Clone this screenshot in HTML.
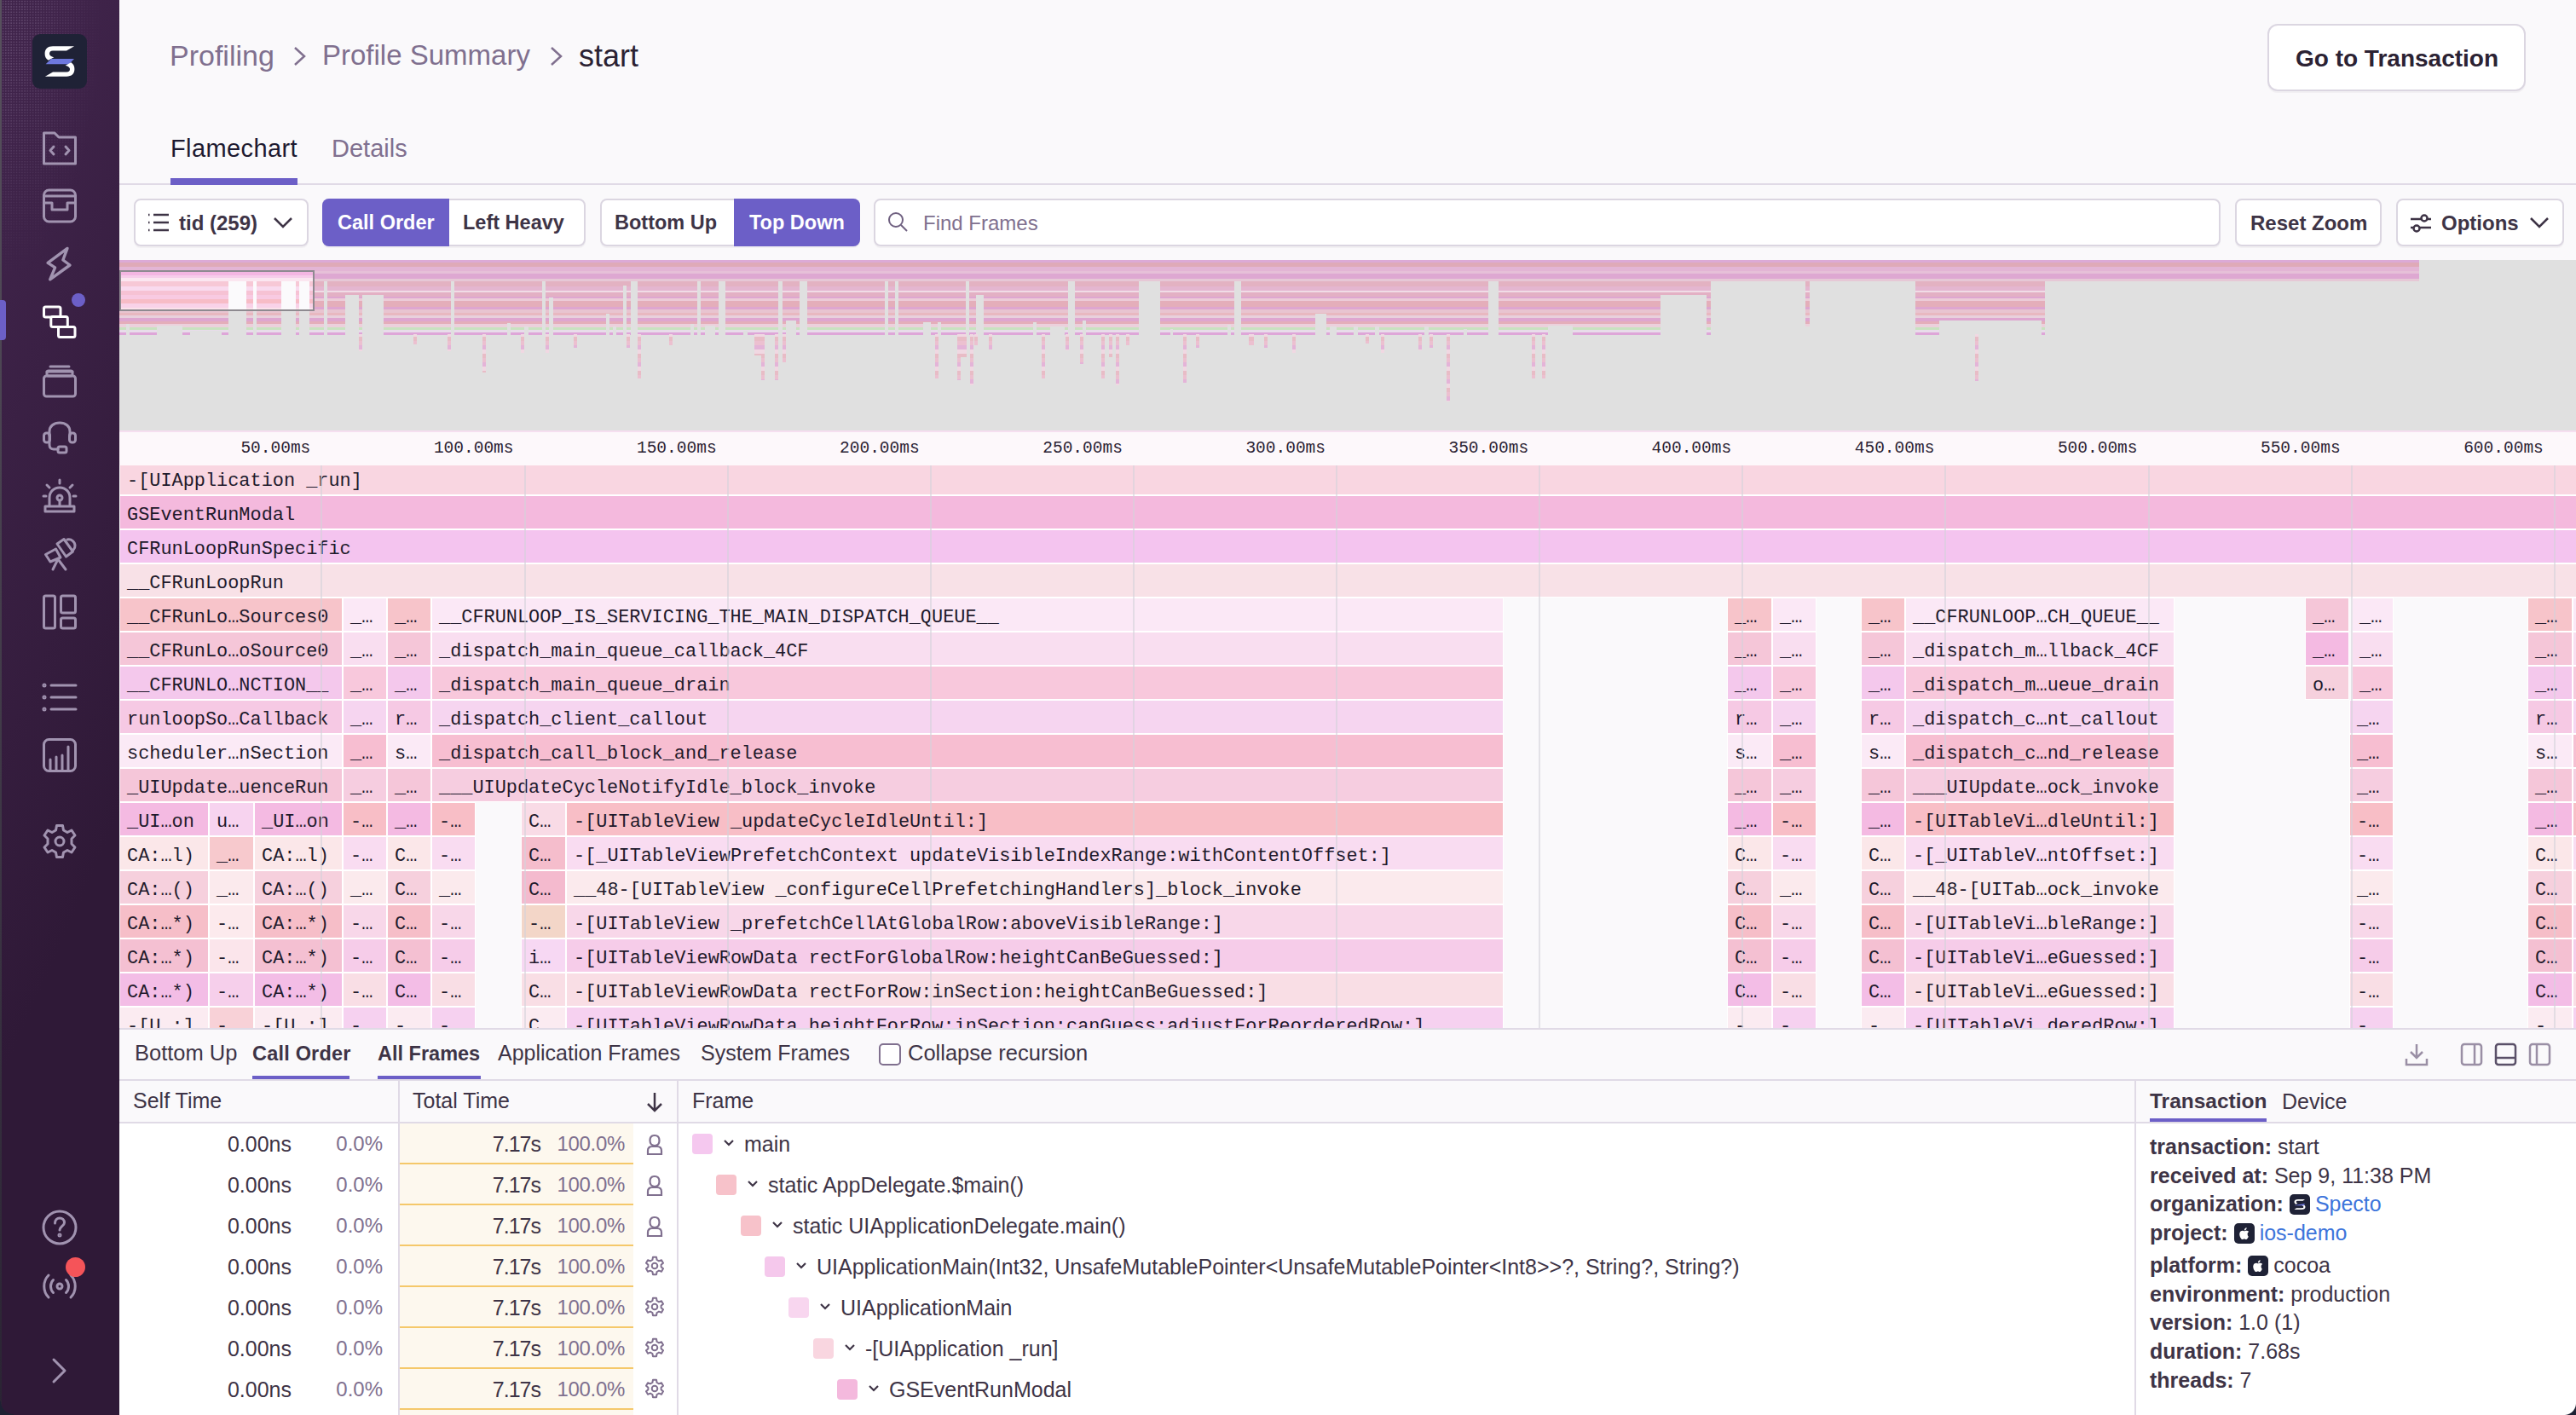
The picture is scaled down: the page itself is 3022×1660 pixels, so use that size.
<!DOCTYPE html><html><head><meta charset="utf-8"><style>
*{box-sizing:border-box}
html,body{margin:0;padding:0}
body{width:3022px;height:1660px;position:relative;overflow:hidden;background:#faf9fb;font-family:"Liberation Sans",sans-serif;color:#2b2233}
.a{position:absolute}
.t{position:absolute;white-space:nowrap;line-height:1}
.btn{position:absolute;background:#fff;border:2px solid #dbd6e1;border-radius:8px;box-shadow:0 2px 0 rgba(43,34,51,0.04)}
.fb{position:absolute;overflow:hidden;box-shadow:0 0 0 1px #fff;font-family:"Liberation Mono",monospace;font-size:21.9px;color:#1f1a2c;white-space:pre;line-height:38px;padding-left:8px}
.fb span{position:relative;top:4px}
.ic{position:absolute;fill:none;stroke:#a193b0;stroke-width:3;stroke-linecap:round;stroke-linejoin:round}
</style></head><body>

<div class="a" style="left:0;top:0;width:140px;height:1660px;background:linear-gradient(294.17deg,#2f1937 35.57%,#40244b 92.42%)"></div>
<div class="a" style="left:0;top:0;width:2px;height:1660px;background:linear-gradient(#58525e,#2a2433)"></div>
<div class="a" style="left:2px;top:0;width:138px;height:360px;background-image:radial-gradient(circle,rgba(170,150,185,0.30) 0.7px,transparent 1px);background-size:3.2px 3.2px;-webkit-mask-image:radial-gradient(ellipse 120px 330px at 0 0,#000 20%,transparent 100%)"></div>
<div class="a" style="left:0;bottom:0;width:16px;height:16px;background:radial-gradient(circle at 16px 0,transparent 14.5px,#1e2133 15.5px);z-index:5"></div>
<svg class="a" style="left:38px;top:40px" width="64" height="64" viewBox="0 0 64 64">
<rect x="0" y="0" width="64" height="64" rx="9" fill="#1f2236"/>
<path d="M49.1 14.3 L40 19.4 L24 19.4 C21 19.4 20 21 20 23 C20 24.5 21 25.8 25.3 27.3 L18.6 30.7 C15.5 28.5 14.6 26 14.6 23 C14.6 17.5 18 14.3 24 14.3 Z" fill="#fff"/>
<path d="M22 29 L49 29 L43 35.2 L15.7 35.2 Z" fill="#6e78dd"/>
<path d="M14.9 49.7 L24 44.6 L40 44.6 C43 44.6 44 43 44 41 C44 39.5 43 38.2 38.7 36.7 L45.4 33.3 C48.5 35.5 49.4 38 49.4 41 C49.4 46.5 46 49.7 40 49.7 Z" fill="#fff"/>
</svg>
<svg class="ic" style="left:48px;top:152px" width="44" height="44" viewBox="0 0 44 44"><path d="M3.5 4 H16 L21 9 H40.5 V40 H3.5 Z"/><path d="M15 20 L11 24.5 L15 29 M29 20 L33 24.5 L29 29"/></svg>
<svg class="ic" style="left:48px;top:220px" width="44" height="44" viewBox="0 0 44 44"><rect x="3.5" y="3" width="37" height="37" rx="6"/><path d="M3.5 10 H40.5 M3.5 18 H13 V26 H31 V18 H40.5"/></svg>
<svg class="ic" style="left:48px;top:287px" width="44" height="44" viewBox="0 0 44 44"><path d="M31 4.4 L8.1 21.4 L16.6 26.9 L10.7 40.9 L34 24 L25.9 18 Z" style="stroke-width:3.4"/></svg>
<svg class="ic" style="left:48px;top:356px;stroke:#fff" width="44" height="44" viewBox="0 0 44 44"><rect x="3.5" y="4" width="19.5" height="12" rx="2" fill="#40244a"/><rect x="11.8" y="15.5" width="19.5" height="12" rx="2" fill="#3f2449"/><rect x="20.5" y="27.5" width="19.5" height="12" rx="2" fill="#3e2448"/></svg>
<div class="a" style="left:84px;top:344px;width:16px;height:16px;border-radius:50%;background:#6c5fc7"></div>
<div class="a" style="left:0;top:352px;width:7px;height:47px;border-radius:0 4px 4px 0;background:#6c5fc7"></div>
<svg class="ic" style="left:48px;top:424px" width="44" height="44" viewBox="0 0 44 44"><path d="M11 6 H33 M7 12 H37"/><rect x="3.5" y="17" width="37" height="24" rx="3"/><rect x="7" y="11" width="30" height="6" rx="2"/></svg>
<svg class="ic" style="left:48px;top:492px" width="44" height="44" viewBox="0 0 44 44"><path d="M10 19 V14 C10 8 15 4 22 4 C29 4 34 8 34 14 V19"/><rect x="3.5" y="16" width="7" height="11" rx="3"/><rect x="33.5" y="16" width="7" height="11" rx="3"/><path d="M10 18 V30 C10 33 12 35 15 35 H20"/><rect x="20" y="32" width="10" height="7" rx="2"/></svg>
<svg class="ic" style="left:48px;top:560px" width="44" height="44" viewBox="0 0 44 44"><path d="M5 40 H39 V34 H5 Z M10 34 V24 C10 17 15 12 22 12 C29 12 34 17 34 24 V34"/><circle cx="22" cy="24" r="3"/><path d="M22 27 V33 M22 3 V7 M7 9 L10 12 M37 9 L34 12 M3 22 H6 M41 22 H38"/></svg>
<svg class="ic" style="left:48px;top:628px" width="44" height="44" viewBox="0 0 44 44"><path d="M5.5 22.5 L17.5 16 L23 26 L11 31 Z"/><path d="M19 10 L27 4.5 L37.5 19 L29.5 25 Z"/><path d="M31 5 C36 4 40 8 40 12 C40 14 39.5 15.5 38.5 16.5"/><path d="M20 28 L14 40 M20 28 L29 40"/></svg>
<svg class="ic" style="left:48px;top:696px" width="44" height="44" viewBox="0 0 44 44"><rect x="3.5" y="3" width="13" height="38" rx="2"/><rect x="23.5" y="3" width="17" height="20" rx="2"/><rect x="23.5" y="29" width="17" height="12" rx="2"/></svg>
<svg class="ic" style="left:48px;top:796px" width="44" height="44" viewBox="0 0 44 44"><path d="M12 8 H41 M12 22 H41 M12 36 H41"/><circle cx="4" cy="8" r="1" /><circle cx="4" cy="22" r="1"/><circle cx="4" cy="36" r="1"/></svg>
<svg class="ic" style="left:48px;top:864px" width="44" height="44" viewBox="0 0 44 44"><rect x="3.5" y="3.5" width="37" height="37" rx="6"/><path d="M11 40 V27 M18 40 V24 M25 40 V22 M32 40 V12"/></svg>
<svg class="ic" style="left:48px;top:965px" width="44" height="44" viewBox="0 0 44 44"><path d="M18.5 3.5 H25.5 L26.5 9 L31 11.5 L36 9 L40 15 L36 19 V25 L40 29 L36 35 L31 32.5 L26.5 35 L25.5 40.5 H18.5 L17.5 35 L13 32.5 L8 35 L4 29 L8 25 V19 L4 15 L8 9 L13 11.5 L17.5 9 Z"/><circle cx="22" cy="22" r="5"/></svg>
<svg class="ic" style="left:48px;top:1418px" width="44" height="44" viewBox="0 0 44 44"><circle cx="22" cy="22" r="19"/><path d="M16.5 17 C16.5 13 19 11 22 11 C25 11 27.5 13 27.5 16.5 C27.5 20 22 21 22 25"/><circle cx="22" cy="31" r="1"/></svg>
<svg class="ic" style="left:48px;top:1487px" width="44" height="44" viewBox="0 0 44 44"><circle cx="22" cy="22" r="3"/><path d="M14.5 14.5 C10.5 18.5 10.5 25.5 14.5 29.5 M29.5 14.5 C33.5 18.5 33.5 25.5 29.5 29.5 M9 9 C2 16 2 28 9 35 M35 9 C42 16 42 28 35 35"/></svg>
<div class="a" style="left:77px;top:1475px;width:23px;height:23px;border-radius:50%;background:#f55459"></div>
<svg class="ic" style="left:48px;top:1586px" width="44" height="44" viewBox="0 0 44 44"><path d="M15 9 L28 22 L15 35"/></svg>
<div class="t" style="left:199px;top:48px;font-size:34px;color:#80708f">Profiling</div>
<svg class="a" style="left:343px;top:54px" width="18" height="24" viewBox="0 0 18 24"><path d="M3 2 L14 12 L3 22" fill="none" stroke="#80708f" stroke-width="2.5"/></svg>
<div class="t" style="left:378px;top:48px;font-size:33px;color:#80708f">Profile Summary</div>
<svg class="a" style="left:644px;top:54px" width="18" height="24" viewBox="0 0 18 24"><path d="M3 2 L14 12 L3 22" fill="none" stroke="#80708f" stroke-width="2.5"/></svg>
<div class="t" style="left:679px;top:48px;font-size:36px;color:#2b2233">start</div>
<div class="btn" style="left:2660px;top:28px;width:303px;height:79px;border-radius:12px"></div>
<div class="t" style="left:2693px;top:55px;font-size:28px;font-weight:bold;color:#2b2233">Go to Transaction</div>
<div class="t" style="left:200px;top:160px;font-size:29px;letter-spacing:0.4px;color:#1d1a30">Flamechart</div>
<div class="t" style="left:389px;top:160px;font-size:29px;color:#80708f">Details</div>
<div class="a" style="left:140px;top:215px;width:2882px;height:2px;background:#e0dae6"></div>
<div class="a" style="left:200px;top:209px;width:149px;height:8px;background:#6c5fc7"></div>
<div class="btn" style="left:157px;top:233px;width:205px;height:56px"></div>
<svg class="a" style="left:172px;top:249px" width="28" height="24" viewBox="0 0 28 24"><path d="M8 3 H26 M8 12 H26 M8 21 H26" stroke="#3e3446" stroke-width="2.5" fill="none"/><path d="M2 3 H3.5 M2 12 H3.5 M2 21 H3.5" stroke="#3e3446" stroke-width="2.5" fill="none"/></svg>
<div class="t" style="left:210px;top:250px;font-size:24px;font-weight:bold;color:#3e3446">tid (259)</div>
<svg class="a" style="left:320px;top:253px" width="24" height="16" viewBox="0 0 24 16"><path d="M2 3 L12 13 L22 3" stroke="#3e3446" stroke-width="2.5" fill="none"/></svg>
<div class="btn" style="left:378px;top:233px;width:309px;height:56px"></div>
<div class="a" style="left:378px;top:233px;width:149px;height:56px;background:#6c5fc7;border-radius:8px 0 0 8px"></div>
<div class="t" style="left:396px;top:250px;font-size:23.5px;font-weight:bold;color:#fff">Call Order</div>
<div class="t" style="left:543px;top:250px;font-size:23.5px;font-weight:bold;color:#3e3446">Left Heavy</div>
<div class="btn" style="left:704px;top:233px;width:305px;height:56px"></div>
<div class="a" style="left:861px;top:233px;width:148px;height:56px;background:#6c5fc7;border-radius:0 8px 8px 0"></div>
<div class="t" style="left:721px;top:250px;font-size:23.5px;font-weight:bold;color:#3e3446">Bottom Up</div>
<div class="t" style="left:879px;top:250px;font-size:23.5px;font-weight:bold;color:#fff">Top Down</div>
<div class="btn" style="left:1025px;top:233px;width:1580px;height:56px"></div>
<svg class="a" style="left:1040px;top:247px" width="28" height="28" viewBox="0 0 28 28"><circle cx="11" cy="11" r="8" stroke="#6f6080" stroke-width="2" fill="none"/><path d="M17 17 L24 24" stroke="#6f6080" stroke-width="2"/></svg>
<div class="t" style="left:1083px;top:250px;font-size:24px;color:#80708f">Find Frames</div>
<div class="btn" style="left:2622px;top:233px;width:172px;height:56px"></div>
<div class="t" style="left:2640px;top:250px;font-size:24px;font-weight:bold;color:#3e3446">Reset Zoom</div>
<div class="btn" style="left:2811px;top:233px;width:197px;height:56px"></div>
<svg class="a" style="left:2826px;top:249px" width="28" height="26" viewBox="0 0 28 26"><path d="M2 8 H26 M2 18 H26" stroke="#3e3446" stroke-width="2.5"/><circle cx="18" cy="7" r="3.5" fill="#fff" stroke="#3e3446" stroke-width="2.5"/><circle cx="9" cy="19" r="3.5" fill="#fff" stroke="#3e3446" stroke-width="2.5"/></svg>
<div class="t" style="left:2864px;top:250px;font-size:24px;font-weight:bold;color:#3e3446">Options</div>
<svg class="a" style="left:2967px;top:253px" width="24" height="16" viewBox="0 0 24 16"><path d="M2 3 L12 13 L22 3" stroke="#3e3446" stroke-width="2.5" fill="none"/></svg>
<svg class="a" style="left:140px;top:305px" width="2882" height="200" viewBox="140 305 2882 200" shape-rendering="crispEdges"><rect x="140" y="305" width="2882" height="200" fill="#e0e0e0"/><defs><pattern id="stp" patternUnits="userSpaceOnUse" x="0" y="0" width="3022" height="505"><rect x="0" y="305" width="3022" height="3" fill="#dcaad6"/><rect x="0" y="308" width="3022" height="5" fill="#dfaab8"/><rect x="0" y="313" width="3022" height="5" fill="#e3b5d5"/><rect x="0" y="318" width="3022" height="3" fill="#e6c0d8"/><rect x="0" y="321" width="3022" height="6" fill="#dea8d2"/><rect x="0" y="327" width="3022" height="3" fill="#e6c8d6"/><rect x="0" y="330" width="3022" height="6" fill="#e3b2c2"/><rect x="0" y="336" width="3022" height="5" fill="#e4b6d0"/><rect x="0" y="341" width="3022" height="2" fill="#f0dce6"/><rect x="0" y="343" width="3022" height="5" fill="#e3b0c4"/><rect x="0" y="348" width="3022" height="2" fill="#dea6d0"/><rect x="0" y="350" width="3022" height="3" fill="#ecccd8"/><rect x="0" y="353" width="3022" height="7" fill="#e4aeba"/><rect x="0" y="360" width="3022" height="3" fill="#dea6d0"/><rect x="0" y="363" width="3022" height="4" fill="#e8c4d0"/><rect x="0" y="367" width="3022" height="3" fill="#e8b8c0"/><rect x="0" y="370" width="3022" height="3" fill="#e8d0dc"/><rect x="0" y="373" width="3022" height="4" fill="#dea6d0"/><rect x="0" y="377" width="3022" height="3" fill="#e4aeba"/><rect x="0" y="380" width="3022" height="4" fill="#ecd0dc"/><rect x="0" y="384" width="3022" height="3" fill="#c8e2c0"/><rect x="0" y="387" width="3022" height="3" fill="#e8dcea"/><rect x="0" y="390" width="3022" height="3" fill="#dea6d8"/></pattern><pattern id="sel" patternUnits="userSpaceOnUse" x="0" y="0" width="3022" height="505"><rect x="0" y="318" width="3022" height="5" fill="#f4b6e2"/><rect x="0" y="323" width="3022" height="3" fill="#f7cdea"/><rect x="0" y="326" width="3022" height="4" fill="#fbe6f0"/><rect x="0" y="330" width="3022" height="6" fill="#f7c8d6"/><rect x="0" y="336" width="3022" height="5" fill="#f9daee"/><rect x="0" y="341" width="3022" height="5" fill="#f6c2d4"/><rect x="0" y="346" width="3022" height="5" fill="#f8cae2"/><rect x="0" y="351" width="3022" height="5" fill="#f7bcc6"/><rect x="0" y="356" width="3022" height="5" fill="#f9d2e8"/><rect x="0" y="361" width="3022" height="3" fill="#fbe2ea"/></pattern><pattern id="spk" patternUnits="userSpaceOnUse" x="0" y="0" width="20" height="20"><rect x="0" y="0" width="20" height="5" fill="#ecc0d0"/><rect x="0" y="5" width="20" height="5" fill="#e4b4d8"/><rect x="0" y="10" width="20" height="5" fill="#f0d8e2"/><rect x="0" y="15" width="20" height="5" fill="#e8bcc6"/></pattern></defs><rect x="140" y="305" width="2698" height="25" fill="url(#stp)"/><rect x="140" y="330" width="1808" height="63" fill="url(#stp)"/><rect x="1948" y="330" width="54" height="16" fill="url(#stp)"/><rect x="2002" y="330" width="5" height="63" fill="url(#stp)"/><rect x="2247" y="330" width="152" height="46" fill="url(#stp)"/><rect x="2247" y="330" width="28" height="63" fill="url(#stp)"/><rect x="2395" y="330" width="4" height="63" fill="url(#stp)"/><rect x="2118" y="330" width="5" height="53" fill="url(#stp)"/><rect x="268" y="330" width="21" height="63" fill="#e0e0e0"/><rect x="297" y="330" width="4" height="63" fill="#e0e0e0"/><rect x="330" y="337" width="17" height="56" fill="#e0e0e0"/><rect x="351" y="330" width="12" height="63" fill="#e0e0e0"/><rect x="380" y="330" width="4" height="63" fill="#e0e0e0"/><rect x="405" y="346" width="16" height="47" fill="#e0e0e0"/><rect x="425" y="346" width="25" height="47" fill="#e0e0e0"/><rect x="529" y="330" width="4" height="63" fill="#e0e0e0"/><rect x="636" y="330" width="4" height="63" fill="#e0e0e0"/><rect x="644" y="349" width="5" height="44" fill="#e0e0e0"/><rect x="731" y="335" width="4" height="58" fill="#e0e0e0"/><rect x="740" y="330" width="8" height="63" fill="#e0e0e0"/><rect x="818" y="330" width="4" height="63" fill="#e0e0e0"/><rect x="843" y="330" width="8" height="63" fill="#e0e0e0"/><rect x="913" y="330" width="5" height="63" fill="#e0e0e0"/><rect x="938" y="330" width="9" height="63" fill="#e0e0e0"/><rect x="1038" y="330" width="4" height="63" fill="#e0e0e0"/><rect x="1050" y="330" width="4" height="63" fill="#e0e0e0"/><rect x="1133" y="330" width="4" height="63" fill="#e0e0e0"/><rect x="1145" y="346" width="9" height="47" fill="#e0e0e0"/><rect x="1253" y="330" width="8" height="63" fill="#e0e0e0"/><rect x="1336" y="330" width="25" height="63" fill="#e0e0e0"/><rect x="1448" y="330" width="8" height="63" fill="#e0e0e0"/><rect x="1543" y="368" width="13" height="25" fill="#e0e0e0"/><rect x="1746" y="330" width="12" height="63" fill="#e0e0e0"/><rect x="1816" y="382" width="29" height="11" fill="#e0e0e0"/><rect x="184" y="382" width="30" height="11" fill="#e0e0e0"/><rect x="1949" y="346" width="53" height="47" fill="#e0e0e0"/><rect x="595" y="379" width="4" height="14" fill="#e0e0e0"/><rect x="615" y="383" width="5" height="10" fill="#e0e0e0"/><rect x="711" y="368" width="4" height="25" fill="#e0e0e0"/><rect x="719" y="383" width="4" height="10" fill="#e0e0e0"/><rect x="810" y="380" width="4" height="13" fill="#e0e0e0"/><rect x="827" y="382" width="12" height="11" fill="#e0e0e0"/><rect x="872" y="388" width="5" height="5" fill="#e0e0e0"/><rect x="922" y="376" width="12" height="17" fill="#e0e0e0"/><rect x="1083" y="378" width="9" height="15" fill="#e0e0e0"/><rect x="1100" y="378" width="4" height="15" fill="#e0e0e0"/><rect x="1212" y="378" width="4" height="15" fill="#e0e0e0"/><rect x="1232" y="383" width="17" height="10" fill="#e0e0e0"/><rect x="1270" y="376" width="4" height="17" fill="#e0e0e0"/><rect x="1373" y="386" width="3" height="7" fill="#e0e0e0"/><rect x="1440" y="381" width="4" height="12" fill="#e0e0e0"/><rect x="1560" y="383" width="8" height="10" fill="#e0e0e0"/><rect x="1588" y="383" width="5" height="10" fill="#e0e0e0"/><rect x="1613" y="383" width="5" height="10" fill="#e0e0e0"/><rect x="1671" y="383" width="5" height="10" fill="#e0e0e0"/><rect x="1717" y="386" width="4" height="7" fill="#e0e0e0"/><rect x="148" y="380" width="4" height="13" fill="#e0e0e0"/><rect x="223" y="388" width="37" height="5" fill="#e0e0e0"/><rect x="421" y="392" width="4" height="20" fill="url(#spk)"/><rect x="485" y="392" width="4" height="12" fill="url(#spk)"/><rect x="525" y="392" width="4" height="20" fill="url(#spk)"/><rect x="566" y="392" width="4" height="45" fill="url(#spk)"/><rect x="611" y="392" width="4" height="22" fill="url(#spk)"/><rect x="640" y="392" width="4" height="22" fill="url(#spk)"/><rect x="673" y="392" width="4" height="16" fill="url(#spk)"/><rect x="735" y="392" width="4" height="16" fill="url(#spk)"/><rect x="748" y="392" width="4" height="52" fill="url(#spk)"/><rect x="785" y="392" width="4" height="13" fill="url(#spk)"/><rect x="885" y="392" width="8" height="25" fill="url(#spk)"/><rect x="893" y="392" width="4" height="54" fill="url(#spk)"/><rect x="909" y="392" width="4" height="54" fill="url(#spk)"/><rect x="918" y="392" width="4" height="33" fill="url(#spk)"/><rect x="1097" y="392" width="4" height="52" fill="url(#spk)"/><rect x="1123" y="392" width="4" height="54" fill="url(#spk)"/><rect x="1126" y="392" width="8" height="27" fill="url(#spk)"/><rect x="1138" y="392" width="4" height="60" fill="url(#spk)"/><rect x="1143" y="392" width="4" height="13" fill="url(#spk)"/><rect x="1160" y="392" width="4" height="18" fill="url(#spk)"/><rect x="1222" y="392" width="4" height="52" fill="url(#spk)"/><rect x="1250" y="392" width="4" height="19" fill="url(#spk)"/><rect x="1267" y="392" width="4" height="35" fill="url(#spk)"/><rect x="1292" y="392" width="4" height="52" fill="url(#spk)"/><rect x="1301" y="392" width="4" height="27" fill="url(#spk)"/><rect x="1309" y="392" width="4" height="60" fill="url(#spk)"/><rect x="1321" y="392" width="4" height="13" fill="url(#spk)"/><rect x="1388" y="392" width="4" height="57" fill="url(#spk)"/><rect x="1403" y="392" width="4" height="16" fill="url(#spk)"/><rect x="1467" y="392" width="4" height="13" fill="url(#spk)"/><rect x="1465" y="392" width="4" height="13" fill="url(#spk)"/><rect x="1483" y="392" width="4" height="16" fill="url(#spk)"/><rect x="1516" y="392" width="4" height="22" fill="url(#spk)"/><rect x="1602" y="392" width="4" height="11" fill="url(#spk)"/><rect x="1620" y="392" width="4" height="22" fill="url(#spk)"/><rect x="1664" y="392" width="4" height="19" fill="url(#spk)"/><rect x="1677" y="392" width="4" height="16" fill="url(#spk)"/><rect x="1697" y="392" width="4" height="79" fill="url(#spk)"/><rect x="1797" y="392" width="4" height="52" fill="url(#spk)"/><rect x="1809" y="392" width="4" height="52" fill="url(#spk)"/><rect x="2317" y="392" width="4" height="55" fill="url(#spk)"/><rect x="2652" y="392" width="3" height="-80" fill="url(#spk)"/><rect x="2836" y="392" width="3" height="-72" fill="url(#spk)"/><rect x="140" y="318" width="228" height="46" fill="url(#sel)"/><rect x="268" y="330" width="21" height="34" fill="#fbfafc"/><rect x="297" y="330" width="4" height="34" fill="#fbfafc"/><rect x="330" y="330" width="17" height="34" fill="#fbfafc"/><rect x="351" y="330" width="12" height="34" fill="#fbfafc"/><rect x="141" y="318" width="227" height="46" fill="none" stroke="#8e8a90" stroke-width="1.5"/></svg>
<div class="a" style="left:140px;top:505px;width:2882px;height:41px;background:#fdf8fb;border-top:2px solid #f6dff0;z-index:3"></div>
<div class="t" style="left:164.3px;width:200px;text-align:right;top:517px;font-family:'Liberation Mono',monospace;font-size:19.5px;color:#2b2233;z-index:4">50.00ms</div>
<div class="t" style="left:402.5px;width:200px;text-align:right;top:517px;font-family:'Liberation Mono',monospace;font-size:19.5px;color:#2b2233;z-index:4">100.00ms</div>
<div class="t" style="left:640.6px;width:200px;text-align:right;top:517px;font-family:'Liberation Mono',monospace;font-size:19.5px;color:#2b2233;z-index:4">150.00ms</div>
<div class="t" style="left:878.7px;width:200px;text-align:right;top:517px;font-family:'Liberation Mono',monospace;font-size:19.5px;color:#2b2233;z-index:4">200.00ms</div>
<div class="t" style="left:1116.9px;width:200px;text-align:right;top:517px;font-family:'Liberation Mono',monospace;font-size:19.5px;color:#2b2233;z-index:4">250.00ms</div>
<div class="t" style="left:1355.0px;width:200px;text-align:right;top:517px;font-family:'Liberation Mono',monospace;font-size:19.5px;color:#2b2233;z-index:4">300.00ms</div>
<div class="t" style="left:1593.1px;width:200px;text-align:right;top:517px;font-family:'Liberation Mono',monospace;font-size:19.5px;color:#2b2233;z-index:4">350.00ms</div>
<div class="t" style="left:1831.2px;width:200px;text-align:right;top:517px;font-family:'Liberation Mono',monospace;font-size:19.5px;color:#2b2233;z-index:4">400.00ms</div>
<div class="t" style="left:2069.4px;width:200px;text-align:right;top:517px;font-family:'Liberation Mono',monospace;font-size:19.5px;color:#2b2233;z-index:4">450.00ms</div>
<div class="t" style="left:2307.5px;width:200px;text-align:right;top:517px;font-family:'Liberation Mono',monospace;font-size:19.5px;color:#2b2233;z-index:4">500.00ms</div>
<div class="t" style="left:2545.6px;width:200px;text-align:right;top:517px;font-family:'Liberation Mono',monospace;font-size:19.5px;color:#2b2233;z-index:4">550.00ms</div>
<div class="t" style="left:2783.8px;width:200px;text-align:right;top:517px;font-family:'Liberation Mono',monospace;font-size:19.5px;color:#2b2233;z-index:4">600.00ms</div>
<div class="a" style="left:140px;top:543px;width:2882px;height:664px;overflow:hidden">
<div class="fb" style="left:1px;top:-1px;width:2881px;height:38px;background:#f9d6e1"><span>-[UIApplication _run]</span></div>
<div class="fb" style="left:1px;top:39px;width:2881px;height:38px;background:#f4b9dd"><span>GSEventRunModal</span></div>
<div class="fb" style="left:1px;top:79px;width:2881px;height:38px;background:#f4c4ef"><span>CFRunLoopRunSpecific</span></div>
<div class="fb" style="left:1px;top:119px;width:2881px;height:38px;background:#f8e1e7"><span>__CFRunLoopRun</span></div>
<div class="fb" style="left:1px;top:159px;width:260px;height:38px;background:#f7c4ca"><span>__CFRunLo…Sources0</span></div>
<div class="fb" style="left:263px;top:159px;width:50px;height:38px;background:#fbe8f6"><span>_…</span></div>
<div class="fb" style="left:315px;top:159px;width:50px;height:38px;background:#f7c4ca"><span>_…</span></div>
<div class="fb" style="left:367px;top:159px;width:1256px;height:38px;background:#fbe8f6"><span>__CFRUNLOOP_IS_SERVICING_THE_MAIN_DISPATCH_QUEUE__</span></div>
<div class="fb" style="left:1887px;top:159px;width:51px;height:38px;background:#f7c4ca"><span>_…</span></div>
<div class="fb" style="left:1940px;top:159px;width:50px;height:38px;background:#fbe8f6"><span>_…</span></div>
<div class="fb" style="left:2044px;top:159px;width:50px;height:38px;background:#f7c4ca"><span>_…</span></div>
<div class="fb" style="left:2096px;top:159px;width:314px;height:38px;background:#fbe8f6"><span>__CFRUNLOOP…CH_QUEUE__</span></div>
<div class="fb" style="left:2565px;top:159px;width:50px;height:38px;background:#f5c6d8"><span>_…</span></div>
<div class="fb" style="left:2620px;top:159px;width:47px;height:38px;background:#fbe8f6"><span>_…</span></div>
<div class="fb" style="left:2826px;top:159px;width:51px;height:38px;background:#f7c4ca"><span>_…</span></div>
<div class="fb" style="left:2879px;top:159px;width:3px;height:38px;background:#fbe8f6"><span></span></div>
<div class="fb" style="left:1px;top:199px;width:260px;height:38px;background:#f5c6d8"><span>__CFRunLo…oSource0</span></div>
<div class="fb" style="left:263px;top:199px;width:50px;height:38px;background:#f9def0"><span>_…</span></div>
<div class="fb" style="left:315px;top:199px;width:50px;height:38px;background:#f5c6d8"><span>_…</span></div>
<div class="fb" style="left:367px;top:199px;width:1256px;height:38px;background:#f9def0"><span>_dispatch_main_queue_callback_4CF</span></div>
<div class="fb" style="left:1887px;top:199px;width:51px;height:38px;background:#f5c6d8"><span>_…</span></div>
<div class="fb" style="left:1940px;top:199px;width:50px;height:38px;background:#f9def0"><span>_…</span></div>
<div class="fb" style="left:2044px;top:199px;width:50px;height:38px;background:#f5c6d8"><span>_…</span></div>
<div class="fb" style="left:2096px;top:199px;width:314px;height:38px;background:#f9def0"><span>_dispatch_m…llback_4CF</span></div>
<div class="fb" style="left:2565px;top:199px;width:50px;height:38px;background:#f4bae2"><span>_…</span></div>
<div class="fb" style="left:2620px;top:199px;width:47px;height:38px;background:#f9def0"><span>_…</span></div>
<div class="fb" style="left:2826px;top:199px;width:51px;height:38px;background:#f5c6d8"><span>_…</span></div>
<div class="fb" style="left:2879px;top:199px;width:3px;height:38px;background:#f9def0"><span></span></div>
<div class="fb" style="left:1px;top:239px;width:260px;height:38px;background:#f4c8ec"><span>__CFRUNLO…NCTION__</span></div>
<div class="fb" style="left:263px;top:239px;width:50px;height:38px;background:#f8c8dc"><span>_…</span></div>
<div class="fb" style="left:315px;top:239px;width:50px;height:38px;background:#f4c8ec"><span>_…</span></div>
<div class="fb" style="left:367px;top:239px;width:1256px;height:38px;background:#f8c8dc"><span>_dispatch_main_queue_drain</span></div>
<div class="fb" style="left:1887px;top:239px;width:51px;height:38px;background:#f4c8ec"><span>_…</span></div>
<div class="fb" style="left:1940px;top:239px;width:50px;height:38px;background:#f8c8dc"><span>_…</span></div>
<div class="fb" style="left:2044px;top:239px;width:50px;height:38px;background:#f4c8ec"><span>_…</span></div>
<div class="fb" style="left:2096px;top:239px;width:314px;height:38px;background:#f8c8dc"><span>_dispatch_m…ueue_drain</span></div>
<div class="fb" style="left:2565px;top:239px;width:50px;height:38px;background:#f6d0dd"><span>o…</span></div>
<div class="fb" style="left:2620px;top:239px;width:47px;height:38px;background:#f8c8dc"><span>_…</span></div>
<div class="fb" style="left:2826px;top:239px;width:51px;height:38px;background:#f4c8ec"><span>_…</span></div>
<div class="fb" style="left:2879px;top:239px;width:3px;height:38px;background:#f8c8dc"><span></span></div>
<div class="fb" style="left:1px;top:279px;width:260px;height:38px;background:#f6c9e4"><span>runloopSo…Callback</span></div>
<div class="fb" style="left:263px;top:279px;width:50px;height:38px;background:#f6d5f0"><span>_…</span></div>
<div class="fb" style="left:315px;top:279px;width:50px;height:38px;background:#f6c9e4"><span>r…</span></div>
<div class="fb" style="left:367px;top:279px;width:1256px;height:38px;background:#f6d5f0"><span>_dispatch_client_callout</span></div>
<div class="fb" style="left:1887px;top:279px;width:51px;height:38px;background:#f6c9e4"><span>r…</span></div>
<div class="fb" style="left:1940px;top:279px;width:50px;height:38px;background:#f6d5f0"><span>_…</span></div>
<div class="fb" style="left:2044px;top:279px;width:50px;height:38px;background:#f6c9e4"><span>r…</span></div>
<div class="fb" style="left:2096px;top:279px;width:314px;height:38px;background:#f6d5f0"><span>_dispatch_c…nt_callout</span></div>
<div class="fb" style="left:2617px;top:279px;width:50px;height:38px;background:#f6d5f0"><span>_…</span></div>
<div class="fb" style="left:2826px;top:279px;width:51px;height:38px;background:#f6c9e4"><span>r…</span></div>
<div class="fb" style="left:2879px;top:279px;width:3px;height:38px;background:#f6d5f0"><span></span></div>
<div class="fb" style="left:1px;top:319px;width:260px;height:38px;background:#fbeaf6"><span>scheduler…nSection</span></div>
<div class="fb" style="left:263px;top:319px;width:50px;height:38px;background:#f7bed1"><span>_…</span></div>
<div class="fb" style="left:315px;top:319px;width:50px;height:38px;background:#fbeaf6"><span>s…</span></div>
<div class="fb" style="left:367px;top:319px;width:1256px;height:38px;background:#f7bed1"><span>_dispatch_call_block_and_release</span></div>
<div class="fb" style="left:1887px;top:319px;width:51px;height:38px;background:#fbeaf6"><span>s…</span></div>
<div class="fb" style="left:1940px;top:319px;width:50px;height:38px;background:#f7bed1"><span>_…</span></div>
<div class="fb" style="left:2044px;top:319px;width:50px;height:38px;background:#fbeaf6"><span>s…</span></div>
<div class="fb" style="left:2096px;top:319px;width:314px;height:38px;background:#f7bed1"><span>_dispatch_c…nd_release</span></div>
<div class="fb" style="left:2617px;top:319px;width:50px;height:38px;background:#f7bed1"><span>_…</span></div>
<div class="fb" style="left:2826px;top:319px;width:51px;height:38px;background:#fbeaf6"><span>s…</span></div>
<div class="fb" style="left:2879px;top:319px;width:3px;height:38px;background:#f7bed1"><span></span></div>
<div class="fb" style="left:1px;top:359px;width:260px;height:38px;background:#f5c6d9"><span>_UIUpdate…uenceRun</span></div>
<div class="fb" style="left:263px;top:359px;width:50px;height:38px;background:#f6cde0"><span>_…</span></div>
<div class="fb" style="left:315px;top:359px;width:50px;height:38px;background:#f5c6d9"><span>_…</span></div>
<div class="fb" style="left:367px;top:359px;width:1256px;height:38px;background:#f6cde0"><span>___UIUpdateCycleNotifyIdle_block_invoke</span></div>
<div class="fb" style="left:1887px;top:359px;width:51px;height:38px;background:#f5c6d9"><span>_…</span></div>
<div class="fb" style="left:1940px;top:359px;width:50px;height:38px;background:#f6cde0"><span>_…</span></div>
<div class="fb" style="left:2044px;top:359px;width:50px;height:38px;background:#f5c6d9"><span>_…</span></div>
<div class="fb" style="left:2096px;top:359px;width:314px;height:38px;background:#f6cde0"><span>___UIUpdate…ock_invoke</span></div>
<div class="fb" style="left:2617px;top:359px;width:50px;height:38px;background:#f6cde0"><span>_…</span></div>
<div class="fb" style="left:2826px;top:359px;width:51px;height:38px;background:#f5c6d9"><span>_…</span></div>
<div class="fb" style="left:2879px;top:359px;width:3px;height:38px;background:#f6cde0"><span></span></div>
<div class="fb" style="left:1px;top:399px;width:103px;height:38px;background:#f4bae2"><span>_UI…on</span></div>
<div class="fb" style="left:106px;top:399px;width:51px;height:38px;background:#f7d3ef"><span>u…</span></div>
<div class="fb" style="left:159px;top:399px;width:102px;height:38px;background:#f4bae2"><span>_UI…on</span></div>
<div class="fb" style="left:263px;top:399px;width:50px;height:38px;background:#f8bec6"><span>-…</span></div>
<div class="fb" style="left:315px;top:399px;width:50px;height:38px;background:#f4bae2"><span>_…</span></div>
<div class="fb" style="left:367px;top:399px;width:50px;height:38px;background:#f8bec6"><span>-…</span></div>
<div class="fb" style="left:472px;top:399px;width:51px;height:38px;background:#f9dbe6"><span>C…</span></div>
<div class="fb" style="left:525px;top:399px;width:1098px;height:38px;background:#f8bec6"><span>-[UITableView _updateCycleIdleUntil:]</span></div>
<div class="fb" style="left:1887px;top:399px;width:51px;height:38px;background:#f4bae2"><span>_…</span></div>
<div class="fb" style="left:1940px;top:399px;width:50px;height:38px;background:#f8bec6"><span>-…</span></div>
<div class="fb" style="left:2044px;top:399px;width:50px;height:38px;background:#f4bae2"><span>_…</span></div>
<div class="fb" style="left:2096px;top:399px;width:314px;height:38px;background:#f8bec6"><span>-[UITableVi…dleUntil:]</span></div>
<div class="fb" style="left:2617px;top:399px;width:50px;height:38px;background:#f8bec6"><span>-…</span></div>
<div class="fb" style="left:2826px;top:399px;width:51px;height:38px;background:#f4bae2"><span>_…</span></div>
<div class="fb" style="left:2879px;top:399px;width:3px;height:38px;background:#f8bec6"><span></span></div>
<div class="fb" style="left:1px;top:439px;width:103px;height:38px;background:#fbe7e9"><span>CA:…l)</span></div>
<div class="fb" style="left:106px;top:439px;width:51px;height:38px;background:#f7c9cd"><span>_…</span></div>
<div class="fb" style="left:159px;top:439px;width:102px;height:38px;background:#fbe7e9"><span>CA:…l)</span></div>
<div class="fb" style="left:263px;top:439px;width:50px;height:38px;background:#f9dcf1"><span>-…</span></div>
<div class="fb" style="left:315px;top:439px;width:50px;height:38px;background:#fbe7e9"><span>C…</span></div>
<div class="fb" style="left:367px;top:439px;width:50px;height:38px;background:#f9dcf1"><span>-…</span></div>
<div class="fb" style="left:472px;top:439px;width:51px;height:38px;background:#f5bdcc"><span>C…</span></div>
<div class="fb" style="left:525px;top:439px;width:1098px;height:38px;background:#f9dcf1"><span>-[_UITableViewPrefetchContext updateVisibleIndexRange:withContentOffset:]</span></div>
<div class="fb" style="left:1887px;top:439px;width:51px;height:38px;background:#fbe7e9"><span>C…</span></div>
<div class="fb" style="left:1940px;top:439px;width:50px;height:38px;background:#f9dcf1"><span>-…</span></div>
<div class="fb" style="left:2044px;top:439px;width:50px;height:38px;background:#fbe7e9"><span>C…</span></div>
<div class="fb" style="left:2096px;top:439px;width:314px;height:38px;background:#f9dcf1"><span>-[_UITableV…ntOffset:]</span></div>
<div class="fb" style="left:2617px;top:439px;width:50px;height:38px;background:#f9dcf1"><span>-…</span></div>
<div class="fb" style="left:2826px;top:439px;width:51px;height:38px;background:#fbe7e9"><span>C…</span></div>
<div class="fb" style="left:2879px;top:439px;width:3px;height:38px;background:#f9dcf1"><span></span></div>
<div class="fb" style="left:1px;top:479px;width:103px;height:38px;background:#f6d0dd"><span>CA:…()</span></div>
<div class="fb" style="left:106px;top:479px;width:51px;height:38px;background:#fbeaed"><span>_…</span></div>
<div class="fb" style="left:159px;top:479px;width:102px;height:38px;background:#f6d0dd"><span>CA:…()</span></div>
<div class="fb" style="left:263px;top:479px;width:50px;height:38px;background:#fbeaed"><span>_…</span></div>
<div class="fb" style="left:315px;top:479px;width:50px;height:38px;background:#f6d0dd"><span>C…</span></div>
<div class="fb" style="left:367px;top:479px;width:50px;height:38px;background:#fbeaed"><span>_…</span></div>
<div class="fb" style="left:472px;top:479px;width:51px;height:38px;background:#f4bace"><span>C…</span></div>
<div class="fb" style="left:525px;top:479px;width:1098px;height:38px;background:#fbeaed"><span>__48-[UITableView _configureCellPrefetchingHandlers]_block_invoke</span></div>
<div class="fb" style="left:1887px;top:479px;width:51px;height:38px;background:#f6d0dd"><span>C…</span></div>
<div class="fb" style="left:1940px;top:479px;width:50px;height:38px;background:#fbeaed"><span>_…</span></div>
<div class="fb" style="left:2044px;top:479px;width:50px;height:38px;background:#f6d0dd"><span>C…</span></div>
<div class="fb" style="left:2096px;top:479px;width:314px;height:38px;background:#fbeaed"><span>__48-[UITab…ock_invoke</span></div>
<div class="fb" style="left:2617px;top:479px;width:50px;height:38px;background:#fbeaed"><span>_…</span></div>
<div class="fb" style="left:2826px;top:479px;width:51px;height:38px;background:#f6d0dd"><span>C…</span></div>
<div class="fb" style="left:2879px;top:479px;width:3px;height:38px;background:#fbeaed"><span></span></div>
<div class="fb" style="left:1px;top:519px;width:103px;height:38px;background:#f6bec8"><span>CA:…*)</span></div>
<div class="fb" style="left:106px;top:519px;width:51px;height:38px;background:#fceaed"><span>-…</span></div>
<div class="fb" style="left:159px;top:519px;width:102px;height:38px;background:#f6bec8"><span>CA:…*)</span></div>
<div class="fb" style="left:263px;top:519px;width:50px;height:38px;background:#f8d7e9"><span>-…</span></div>
<div class="fb" style="left:315px;top:519px;width:50px;height:38px;background:#f6bec8"><span>C…</span></div>
<div class="fb" style="left:367px;top:519px;width:50px;height:38px;background:#f8d7e9"><span>-…</span></div>
<div class="fb" style="left:472px;top:519px;width:51px;height:38px;background:#f3d6c8"><span>-…</span></div>
<div class="fb" style="left:525px;top:519px;width:1098px;height:38px;background:#f8d7e9"><span>-[UITableView _prefetchCellAtGlobalRow:aboveVisibleRange:]</span></div>
<div class="fb" style="left:1887px;top:519px;width:51px;height:38px;background:#f6bec8"><span>C…</span></div>
<div class="fb" style="left:1940px;top:519px;width:50px;height:38px;background:#f8d7e9"><span>-…</span></div>
<div class="fb" style="left:2044px;top:519px;width:50px;height:38px;background:#f6bec8"><span>C…</span></div>
<div class="fb" style="left:2096px;top:519px;width:314px;height:38px;background:#f8d7e9"><span>-[UITableVi…bleRange:]</span></div>
<div class="fb" style="left:2617px;top:519px;width:50px;height:38px;background:#f8d7e9"><span>-…</span></div>
<div class="fb" style="left:2826px;top:519px;width:51px;height:38px;background:#f6bec8"><span>C…</span></div>
<div class="fb" style="left:2879px;top:519px;width:3px;height:38px;background:#f8d7e9"><span></span></div>
<div class="fb" style="left:1px;top:559px;width:103px;height:38px;background:#f4c0d2"><span>CA:…*)</span></div>
<div class="fb" style="left:106px;top:559px;width:51px;height:38px;background:#fbe5eb"><span>-…</span></div>
<div class="fb" style="left:159px;top:559px;width:102px;height:38px;background:#f4c0d2"><span>CA:…*)</span></div>
<div class="fb" style="left:263px;top:559px;width:50px;height:38px;background:#f6cce9"><span>-…</span></div>
<div class="fb" style="left:315px;top:559px;width:50px;height:38px;background:#f4c0d2"><span>C…</span></div>
<div class="fb" style="left:367px;top:559px;width:50px;height:38px;background:#f6cce9"><span>-…</span></div>
<div class="fb" style="left:472px;top:559px;width:51px;height:38px;background:#f7d8f3"><span>i…</span></div>
<div class="fb" style="left:525px;top:559px;width:1098px;height:38px;background:#f6cce9"><span>-[UITableViewRowData rectForGlobalRow:heightCanBeGuessed:]</span></div>
<div class="fb" style="left:1887px;top:559px;width:51px;height:38px;background:#f4c0d2"><span>C…</span></div>
<div class="fb" style="left:1940px;top:559px;width:50px;height:38px;background:#f6cce9"><span>-…</span></div>
<div class="fb" style="left:2044px;top:559px;width:50px;height:38px;background:#f4c0d2"><span>C…</span></div>
<div class="fb" style="left:2096px;top:559px;width:314px;height:38px;background:#f6cce9"><span>-[UITableVi…eGuessed:]</span></div>
<div class="fb" style="left:2617px;top:559px;width:50px;height:38px;background:#f6cce9"><span>-…</span></div>
<div class="fb" style="left:2826px;top:559px;width:51px;height:38px;background:#f4c0d2"><span>C…</span></div>
<div class="fb" style="left:2879px;top:559px;width:3px;height:38px;background:#f6cce9"><span></span></div>
<div class="fb" style="left:1px;top:599px;width:103px;height:38px;background:#f3bde6"><span>CA:…*)</span></div>
<div class="fb" style="left:106px;top:599px;width:51px;height:38px;background:#f6cfeb"><span>-…</span></div>
<div class="fb" style="left:159px;top:599px;width:102px;height:38px;background:#f3bde6"><span>CA:…*)</span></div>
<div class="fb" style="left:263px;top:599px;width:50px;height:38px;background:#f9dee5"><span>-…</span></div>
<div class="fb" style="left:315px;top:599px;width:50px;height:38px;background:#f3bde6"><span>C…</span></div>
<div class="fb" style="left:367px;top:599px;width:50px;height:38px;background:#f9dee5"><span>-…</span></div>
<div class="fb" style="left:472px;top:599px;width:51px;height:38px;background:#f9dee5"><span>C…</span></div>
<div class="fb" style="left:525px;top:599px;width:1098px;height:38px;background:#f9dee5"><span>-[UITableViewRowData rectForRow:inSection:heightCanBeGuessed:]</span></div>
<div class="fb" style="left:1887px;top:599px;width:51px;height:38px;background:#f3bde6"><span>C…</span></div>
<div class="fb" style="left:1940px;top:599px;width:50px;height:38px;background:#f9dee5"><span>-…</span></div>
<div class="fb" style="left:2044px;top:599px;width:50px;height:38px;background:#f3bde6"><span>C…</span></div>
<div class="fb" style="left:2096px;top:599px;width:314px;height:38px;background:#f9dee5"><span>-[UITableVi…eGuessed:]</span></div>
<div class="fb" style="left:2617px;top:599px;width:50px;height:38px;background:#f9dee5"><span>-…</span></div>
<div class="fb" style="left:2826px;top:599px;width:51px;height:38px;background:#f3bde6"><span>C…</span></div>
<div class="fb" style="left:2879px;top:599px;width:3px;height:38px;background:#f9dee5"><span></span></div>
<div class="fb" style="left:1px;top:639px;width:103px;height:38px;background:#fbebf1"><span>-[U…:]</span></div>
<div class="fb" style="left:106px;top:639px;width:51px;height:38px;background:#f8d1d7"><span>-…</span></div>
<div class="fb" style="left:159px;top:639px;width:102px;height:38px;background:#fbebf1"><span>-[U…:]</span></div>
<div class="fb" style="left:263px;top:639px;width:50px;height:38px;background:#f6d1f0"><span>-…</span></div>
<div class="fb" style="left:315px;top:639px;width:50px;height:38px;background:#fbebf1"><span>-…</span></div>
<div class="fb" style="left:367px;top:639px;width:50px;height:38px;background:#f6d1f0"><span>-…</span></div>
<div class="fb" style="left:472px;top:639px;width:51px;height:38px;background:#fbebf1"><span>C…</span></div>
<div class="fb" style="left:525px;top:639px;width:1098px;height:38px;background:#f6d1f0"><span>-[UITableViewRowData heightForRow:inSection:canGuess:adjustForReorderedRow:]</span></div>
<div class="fb" style="left:1887px;top:639px;width:51px;height:38px;background:#fbebf1"><span>-…</span></div>
<div class="fb" style="left:1940px;top:639px;width:50px;height:38px;background:#f6d1f0"><span>-…</span></div>
<div class="fb" style="left:2044px;top:639px;width:50px;height:38px;background:#fbebf1"><span>-…</span></div>
<div class="fb" style="left:2096px;top:639px;width:314px;height:38px;background:#f6d1f0"><span>-[UITableVi…deredRow:]</span></div>
<div class="fb" style="left:2617px;top:639px;width:50px;height:38px;background:#f6d1f0"><span>-…</span></div>
<div class="fb" style="left:2826px;top:639px;width:51px;height:38px;background:#fbebf1"><span>-…</span></div>
<div class="fb" style="left:2879px;top:639px;width:3px;height:38px;background:#f6d1f0"><span></span></div>
<div class="a" style="left:236.3px;top:0;width:2px;height:664px;background:rgba(212,210,218,0.6)"></div>
<div class="a" style="left:474.5px;top:0;width:2px;height:664px;background:rgba(212,210,218,0.6)"></div>
<div class="a" style="left:712.6px;top:0;width:2px;height:664px;background:rgba(212,210,218,0.6)"></div>
<div class="a" style="left:950.7px;top:0;width:2px;height:664px;background:rgba(212,210,218,0.6)"></div>
<div class="a" style="left:1188.9px;top:0;width:2px;height:664px;background:rgba(212,210,218,0.6)"></div>
<div class="a" style="left:1427.0px;top:0;width:2px;height:664px;background:rgba(212,210,218,0.6)"></div>
<div class="a" style="left:1665.1px;top:0;width:2px;height:664px;background:rgba(212,210,218,0.6)"></div>
<div class="a" style="left:1903.2px;top:0;width:2px;height:664px;background:rgba(212,210,218,0.6)"></div>
<div class="a" style="left:2141.4px;top:0;width:2px;height:664px;background:rgba(212,210,218,0.6)"></div>
<div class="a" style="left:2379.5px;top:0;width:2px;height:664px;background:rgba(212,210,218,0.6)"></div>
<div class="a" style="left:2617.6px;top:0;width:2px;height:664px;background:rgba(212,210,218,0.6)"></div>
<div class="a" style="left:2855.8px;top:0;width:2px;height:664px;background:rgba(212,210,218,0.6)"></div>
</div>
<div class="a" style="left:140px;top:1206px;width:2882px;height:454px;background:#faf9fb;border-top:2px solid #e0dae6"></div>
<div class="t" style="left:158px;top:1223px;font-size:25.5px;color:#3e3446">Bottom Up</div>
<div class="t" style="left:296px;top:1223px;font-size:23.5px;letter-spacing:0.2px;font-weight:bold;color:#3e3446;top:1225px">Call Order</div>
<div class="t" style="left:443px;top:1225px;font-size:23.5px;font-weight:bold;color:#3e3446">All Frames</div>
<div class="t" style="left:584px;top:1223px;font-size:25px;color:#3e3446">Application Frames</div>
<div class="t" style="left:822px;top:1223px;font-size:25px;color:#3e3446">System Frames</div>
<div class="a" style="left:1031px;top:1224px;width:26px;height:26px;border:2px solid #80708f;border-radius:5px;background:#fff"></div>
<div class="t" style="left:1065px;top:1223px;font-size:25.5px;color:#3e3446">Collapse recursion</div>
<div class="a" style="left:296px;top:1262px;width:114px;height:4px;background:#6c5fc7"></div>
<div class="a" style="left:443px;top:1262px;width:121px;height:4px;background:#6c5fc7"></div>
<svg class="a" style="left:2820px;top:1222px" width="30" height="30" viewBox="0 0 30 30"><path d="M15 3 V19 M8 12 L15 19 L22 12 M3 20 V27 H27 V20" fill="none" stroke="#9a8fa5" stroke-width="2.5"/></svg>
<svg class="a" style="left:2885px;top:1222px" width="30" height="30" viewBox="0 0 30 30"><rect x="3" y="3" width="23" height="24" rx="3" fill="none" stroke="#9a8fa5" stroke-width="2.5"/><path d="M18 3 V27" stroke="#9a8fa5" stroke-width="2.5"/></svg>
<svg class="a" style="left:2925px;top:1222px" width="30" height="30" viewBox="0 0 30 30"><rect x="3" y="3" width="23" height="24" rx="3" fill="none" stroke="#5a5068" stroke-width="2.5"/><path d="M3 19 H26" stroke="#5a5068" stroke-width="2.5"/></svg>
<svg class="a" style="left:2965px;top:1222px" width="30" height="30" viewBox="0 0 30 30"><rect x="3" y="3" width="23" height="24" rx="3" fill="none" stroke="#9a8fa5" stroke-width="2.5"/><path d="M11 3 V27" stroke="#9a8fa5" stroke-width="2.5"/></svg>
<div class="a" style="left:140px;top:1266px;width:2882px;height:2px;background:#e0dae6"></div>
<div class="a" style="left:140px;top:1316px;width:2882px;height:2px;background:#e0dae6"></div>
<div class="a" style="left:140px;top:1318px;width:2882px;height:342px;background:#fff"></div>
<div class="a" style="left:467px;top:1268px;width:2px;height:392px;background:#e0dae6"></div>
<div class="a" style="left:794px;top:1268px;width:2px;height:392px;background:#e0dae6"></div>
<div class="a" style="left:2504px;top:1268px;width:2px;height:392px;background:#e0dae6"></div>
<div class="t" style="left:156px;top:1279px;font-size:25px;color:#3e3446">Self Time</div>
<div class="t" style="left:484px;top:1279px;font-size:25px;color:#3e3446">Total Time</div>
<svg class="a" style="left:757px;top:1280px" width="22" height="26" viewBox="0 0 22 26"><path d="M11 2 V23 M3 15 L11 23 L19 15" fill="none" stroke="#3e3446" stroke-width="2.5"/></svg>
<div class="t" style="left:812px;top:1279px;font-size:25px;color:#3e3446">Frame</div>
<div class="t" style="left:2522px;top:1280px;font-size:24.5px;font-weight:bold;color:#3e3446">Transaction</div>
<div class="t" style="left:2677px;top:1280px;font-size:25px;color:#3e3446">Device</div>
<div class="a" style="left:2522px;top:1312px;width:137px;height:4px;background:#6c5fc7"></div>
<div class="a" style="left:469px;top:1318px;width:274px;height:48px;background:#fdf8ee;border-bottom:2px solid #f5c86a"></div>
<div class="t" style="left:142px;width:200px;text-align:right;top:1330px;font-size:25px;color:#3e3446">0.00ns</div>
<div class="t" style="left:249px;width:200px;text-align:right;top:1330px;font-size:24px;color:#80708f">0.0%</div>
<div class="t" style="left:434px;width:200px;text-align:right;top:1330px;font-size:25px;letter-spacing:-1px;color:#3e3446">7.17s</div>
<div class="t" style="left:533px;width:200px;text-align:right;top:1330px;font-size:24px;letter-spacing:-0.3px;color:#80708f">100.0%</div>
<svg class="a" style="left:757px;top:1329px" width="22" height="26" viewBox="0 0 22 26"><path d="M11 3 C14.5 3 16.5 5.5 16.5 9 C16.5 12.5 14.5 15 11 15 C7.5 15 5.5 12.5 5.5 9 C5.5 5.5 7.5 3 11 3 Z M3 25 V21 C3 18 5 16 8 16 H14 C17 16 19 18 19 21 V25 Z" fill="none" stroke="#80708f" stroke-width="2.2"/></svg>
<div class="a" style="left:812px;top:1330px;width:24px;height:24px;border-radius:4px;background:#f5c8ef"></div>
<svg class="a" style="left:848px;top:1336px" width="14" height="10" viewBox="0 0 14 10"><path d="M2 2 L7 7 L12 2" fill="none" stroke="#3e3446" stroke-width="2.2"/></svg>
<div class="t" style="left:873px;top:1330px;font-size:25px;color:#3e3446">main</div>
<div class="a" style="left:469px;top:1366px;width:274px;height:48px;background:#fdf8ee;border-bottom:2px solid #f5c86a"></div>
<div class="t" style="left:142px;width:200px;text-align:right;top:1378px;font-size:25px;color:#3e3446">0.00ns</div>
<div class="t" style="left:249px;width:200px;text-align:right;top:1378px;font-size:24px;color:#80708f">0.0%</div>
<div class="t" style="left:434px;width:200px;text-align:right;top:1378px;font-size:25px;letter-spacing:-1px;color:#3e3446">7.17s</div>
<div class="t" style="left:533px;width:200px;text-align:right;top:1378px;font-size:24px;letter-spacing:-0.3px;color:#80708f">100.0%</div>
<svg class="a" style="left:757px;top:1377px" width="22" height="26" viewBox="0 0 22 26"><path d="M11 3 C14.5 3 16.5 5.5 16.5 9 C16.5 12.5 14.5 15 11 15 C7.5 15 5.5 12.5 5.5 9 C5.5 5.5 7.5 3 11 3 Z M3 25 V21 C3 18 5 16 8 16 H14 C17 16 19 18 19 21 V25 Z" fill="none" stroke="#80708f" stroke-width="2.2"/></svg>
<div class="a" style="left:840px;top:1378px;width:24px;height:24px;border-radius:4px;background:#f7c2ca"></div>
<svg class="a" style="left:876px;top:1384px" width="14" height="10" viewBox="0 0 14 10"><path d="M2 2 L7 7 L12 2" fill="none" stroke="#3e3446" stroke-width="2.2"/></svg>
<div class="t" style="left:901px;top:1378px;font-size:25px;color:#3e3446">static AppDelegate.$main()</div>
<div class="a" style="left:469px;top:1414px;width:274px;height:48px;background:#fdf8ee;border-bottom:2px solid #f5c86a"></div>
<div class="t" style="left:142px;width:200px;text-align:right;top:1426px;font-size:25px;color:#3e3446">0.00ns</div>
<div class="t" style="left:249px;width:200px;text-align:right;top:1426px;font-size:24px;color:#80708f">0.0%</div>
<div class="t" style="left:434px;width:200px;text-align:right;top:1426px;font-size:25px;letter-spacing:-1px;color:#3e3446">7.17s</div>
<div class="t" style="left:533px;width:200px;text-align:right;top:1426px;font-size:24px;letter-spacing:-0.3px;color:#80708f">100.0%</div>
<svg class="a" style="left:757px;top:1425px" width="22" height="26" viewBox="0 0 22 26"><path d="M11 3 C14.5 3 16.5 5.5 16.5 9 C16.5 12.5 14.5 15 11 15 C7.5 15 5.5 12.5 5.5 9 C5.5 5.5 7.5 3 11 3 Z M3 25 V21 C3 18 5 16 8 16 H14 C17 16 19 18 19 21 V25 Z" fill="none" stroke="#80708f" stroke-width="2.2"/></svg>
<div class="a" style="left:869px;top:1426px;width:24px;height:24px;border-radius:4px;background:#f7c2ca"></div>
<svg class="a" style="left:905px;top:1432px" width="14" height="10" viewBox="0 0 14 10"><path d="M2 2 L7 7 L12 2" fill="none" stroke="#3e3446" stroke-width="2.2"/></svg>
<div class="t" style="left:930px;top:1426px;font-size:25px;color:#3e3446">static UIApplicationDelegate.main()</div>
<div class="a" style="left:469px;top:1462px;width:274px;height:48px;background:#fdf8ee;border-bottom:2px solid #f5c86a"></div>
<div class="t" style="left:142px;width:200px;text-align:right;top:1474px;font-size:25px;color:#3e3446">0.00ns</div>
<div class="t" style="left:249px;width:200px;text-align:right;top:1474px;font-size:24px;color:#80708f">0.0%</div>
<div class="t" style="left:434px;width:200px;text-align:right;top:1474px;font-size:25px;letter-spacing:-1px;color:#3e3446">7.17s</div>
<div class="t" style="left:533px;width:200px;text-align:right;top:1474px;font-size:24px;letter-spacing:-0.3px;color:#80708f">100.0%</div>
<svg class="a" style="left:757px;top:1473px" width="22" height="26" viewBox="0 0 22 26"><path d="M9 1.8 H13 L13.6 5 L16 6.4 L19 5.3 L21 8.7 L18.6 10.8 V13.2 L21 15.3 L19 18.7 L16 17.6 L13.6 19 L13 22.2 H9 L8.4 19 L6 17.6 L3 18.7 L1 15.3 L3.4 13.2 V10.8 L1 8.7 L3 5.3 L6 6.4 L8.4 5 Z" fill="none" stroke="#80708f" stroke-width="2" stroke-linejoin="round"/><circle cx="11" cy="12" r="3.3" fill="none" stroke="#80708f" stroke-width="2"/></svg>
<div class="a" style="left:897px;top:1474px;width:24px;height:24px;border-radius:4px;background:#f5c8ec"></div>
<svg class="a" style="left:933px;top:1480px" width="14" height="10" viewBox="0 0 14 10"><path d="M2 2 L7 7 L12 2" fill="none" stroke="#3e3446" stroke-width="2.2"/></svg>
<div class="t" style="left:958px;top:1474px;font-size:25px;color:#3e3446">UIApplicationMain(Int32, UnsafeMutablePointer&lt;UnsafeMutablePointer&lt;Int8&gt;&gt;?, String?, String?)</div>
<div class="a" style="left:469px;top:1510px;width:274px;height:48px;background:#fdf8ee;border-bottom:2px solid #f5c86a"></div>
<div class="t" style="left:142px;width:200px;text-align:right;top:1522px;font-size:25px;color:#3e3446">0.00ns</div>
<div class="t" style="left:249px;width:200px;text-align:right;top:1522px;font-size:24px;color:#80708f">0.0%</div>
<div class="t" style="left:434px;width:200px;text-align:right;top:1522px;font-size:25px;letter-spacing:-1px;color:#3e3446">7.17s</div>
<div class="t" style="left:533px;width:200px;text-align:right;top:1522px;font-size:24px;letter-spacing:-0.3px;color:#80708f">100.0%</div>
<svg class="a" style="left:757px;top:1521px" width="22" height="26" viewBox="0 0 22 26"><path d="M9 1.8 H13 L13.6 5 L16 6.4 L19 5.3 L21 8.7 L18.6 10.8 V13.2 L21 15.3 L19 18.7 L16 17.6 L13.6 19 L13 22.2 H9 L8.4 19 L6 17.6 L3 18.7 L1 15.3 L3.4 13.2 V10.8 L1 8.7 L3 5.3 L6 6.4 L8.4 5 Z" fill="none" stroke="#80708f" stroke-width="2" stroke-linejoin="round"/><circle cx="11" cy="12" r="3.3" fill="none" stroke="#80708f" stroke-width="2"/></svg>
<div class="a" style="left:925px;top:1522px;width:24px;height:24px;border-radius:4px;background:#f8d6ef"></div>
<svg class="a" style="left:961px;top:1528px" width="14" height="10" viewBox="0 0 14 10"><path d="M2 2 L7 7 L12 2" fill="none" stroke="#3e3446" stroke-width="2.2"/></svg>
<div class="t" style="left:986px;top:1522px;font-size:25px;color:#3e3446">UIApplicationMain</div>
<div class="a" style="left:469px;top:1558px;width:274px;height:48px;background:#fdf8ee;border-bottom:2px solid #f5c86a"></div>
<div class="t" style="left:142px;width:200px;text-align:right;top:1570px;font-size:25px;color:#3e3446">0.00ns</div>
<div class="t" style="left:249px;width:200px;text-align:right;top:1570px;font-size:24px;color:#80708f">0.0%</div>
<div class="t" style="left:434px;width:200px;text-align:right;top:1570px;font-size:25px;letter-spacing:-1px;color:#3e3446">7.17s</div>
<div class="t" style="left:533px;width:200px;text-align:right;top:1570px;font-size:24px;letter-spacing:-0.3px;color:#80708f">100.0%</div>
<svg class="a" style="left:757px;top:1569px" width="22" height="26" viewBox="0 0 22 26"><path d="M9 1.8 H13 L13.6 5 L16 6.4 L19 5.3 L21 8.7 L18.6 10.8 V13.2 L21 15.3 L19 18.7 L16 17.6 L13.6 19 L13 22.2 H9 L8.4 19 L6 17.6 L3 18.7 L1 15.3 L3.4 13.2 V10.8 L1 8.7 L3 5.3 L6 6.4 L8.4 5 Z" fill="none" stroke="#80708f" stroke-width="2" stroke-linejoin="round"/><circle cx="11" cy="12" r="3.3" fill="none" stroke="#80708f" stroke-width="2"/></svg>
<div class="a" style="left:954px;top:1570px;width:24px;height:24px;border-radius:4px;background:#f9d6e0"></div>
<svg class="a" style="left:990px;top:1576px" width="14" height="10" viewBox="0 0 14 10"><path d="M2 2 L7 7 L12 2" fill="none" stroke="#3e3446" stroke-width="2.2"/></svg>
<div class="t" style="left:1015px;top:1570px;font-size:25px;color:#3e3446">-[UIApplication _run]</div>
<div class="a" style="left:469px;top:1606px;width:274px;height:48px;background:#fdf8ee;border-bottom:2px solid #f5c86a"></div>
<div class="t" style="left:142px;width:200px;text-align:right;top:1618px;font-size:25px;color:#3e3446">0.00ns</div>
<div class="t" style="left:249px;width:200px;text-align:right;top:1618px;font-size:24px;color:#80708f">0.0%</div>
<div class="t" style="left:434px;width:200px;text-align:right;top:1618px;font-size:25px;letter-spacing:-1px;color:#3e3446">7.17s</div>
<div class="t" style="left:533px;width:200px;text-align:right;top:1618px;font-size:24px;letter-spacing:-0.3px;color:#80708f">100.0%</div>
<svg class="a" style="left:757px;top:1617px" width="22" height="26" viewBox="0 0 22 26"><path d="M9 1.8 H13 L13.6 5 L16 6.4 L19 5.3 L21 8.7 L18.6 10.8 V13.2 L21 15.3 L19 18.7 L16 17.6 L13.6 19 L13 22.2 H9 L8.4 19 L6 17.6 L3 18.7 L1 15.3 L3.4 13.2 V10.8 L1 8.7 L3 5.3 L6 6.4 L8.4 5 Z" fill="none" stroke="#80708f" stroke-width="2" stroke-linejoin="round"/><circle cx="11" cy="12" r="3.3" fill="none" stroke="#80708f" stroke-width="2"/></svg>
<div class="a" style="left:982px;top:1618px;width:24px;height:24px;border-radius:4px;background:#f4b9dd"></div>
<svg class="a" style="left:1018px;top:1624px" width="14" height="10" viewBox="0 0 14 10"><path d="M2 2 L7 7 L12 2" fill="none" stroke="#3e3446" stroke-width="2.2"/></svg>
<div class="t" style="left:1043px;top:1618px;font-size:25px;color:#3e3446">GSEventRunModal</div>
<div class="a" style="left:469px;top:1654px;width:274px;height:48px;background:#fdf8ee;border-bottom:2px solid #f5c86a"></div>
<div class="t" style="left:142px;width:200px;text-align:right;top:1666px;font-size:25px;color:#3e3446">0.00ns</div>
<div class="t" style="left:249px;width:200px;text-align:right;top:1666px;font-size:24px;color:#80708f">0.0%</div>
<div class="t" style="left:434px;width:200px;text-align:right;top:1666px;font-size:25px;letter-spacing:-1px;color:#3e3446">7.17s</div>
<div class="t" style="left:533px;width:200px;text-align:right;top:1666px;font-size:24px;letter-spacing:-0.3px;color:#80708f">100.0%</div>
<svg class="a" style="left:757px;top:1665px" width="22" height="26" viewBox="0 0 22 26"><path d="M9 1.8 H13 L13.6 5 L16 6.4 L19 5.3 L21 8.7 L18.6 10.8 V13.2 L21 15.3 L19 18.7 L16 17.6 L13.6 19 L13 22.2 H9 L8.4 19 L6 17.6 L3 18.7 L1 15.3 L3.4 13.2 V10.8 L1 8.7 L3 5.3 L6 6.4 L8.4 5 Z" fill="none" stroke="#80708f" stroke-width="2" stroke-linejoin="round"/><circle cx="11" cy="12" r="3.3" fill="none" stroke="#80708f" stroke-width="2"/></svg>
<div class="a" style="left:1010px;top:1666px;width:24px;height:24px;border-radius:4px;background:#f4c4ef"></div>
<svg class="a" style="left:1046px;top:1672px" width="14" height="10" viewBox="0 0 14 10"><path d="M2 2 L7 7 L12 2" fill="none" stroke="#3e3446" stroke-width="2.2"/></svg>
<div class="t" style="left:1071px;top:1666px;font-size:25px;color:#3e3446">CFRunLoopRunSpecific</div>
<div class="a" style="left:2506px;top:1318px;width:516px;height:342px;background:#fff"></div>
<div class="t" style="left:2522px;top:1333px;font-size:25px;color:#3e3446"><b>transaction:</b> <span style="color:#3e3446">start</span></div>
<div class="t" style="left:2522px;top:1367px;font-size:25px;color:#3e3446"><b>received at:</b> <span style="color:#3e3446">Sep 9, 11:38 PM</span></div>
<div class="t" style="left:2522px;top:1400px;font-size:25px;color:#3e3446"><b>organization:</b> <svg width="24" height="24" viewBox="0 0 24 24" style="vertical-align:-4px;margin-right:6px"><rect width="24" height="24" rx="5" fill="#1f2236"/><path d="M18 6 H10 C7 6 5.5 7.3 5.5 9 C5.5 10.6 6.5 11.4 7.6 11.8 L9.4 10.4 C8.2 10.1 7.7 9.7 7.7 9 C7.7 8.2 8.6 7.8 10 7.8 H15.6 Z M5.5 18 H14 C17 18 18.5 16.7 18.5 15 C18.5 13.4 17.5 12.6 16.4 12.2 L14.6 13.6 C15.8 13.9 16.3 14.3 16.3 15 C16.3 15.8 15.4 16.2 14 16.2 H8 Z" fill="#fff"/><path d="M7 12.8 L18 11 L16.6 13.2 L5.5 13.2 Z" fill="#6e78dd"/></svg><span style="color:#3d74db">Specto</span></div>
<div class="t" style="left:2522px;top:1434px;font-size:25px;color:#3e3446"><b>project:</b> <svg width="24" height="24" viewBox="0 0 24 24" style="vertical-align:-4px;margin-right:6px"><rect width="24" height="24" rx="5" fill="#1f2236"/><path d="M15.6 12.6 C15.6 10.9 17 10.1 17.1 10 C16.3 8.8 15 8.7 14.6 8.7 C13.5 8.6 12.5 9.3 12 9.3 C11.4 9.3 10.6 8.7 9.7 8.7 C8.5 8.7 7.4 9.4 6.8 10.5 C5.6 12.6 6.5 15.7 7.7 17.4 C8.2 18.2 8.9 19.1 9.7 19.1 C10.5 19.1 10.8 18.6 11.8 18.6 C12.8 18.6 13 19.1 13.9 19.1 C14.8 19.1 15.3 18.3 15.9 17.5 C16.5 16.6 16.8 15.7 16.8 15.6 C16.8 15.6 15.6 15.1 15.6 12.6 Z M13.9 7.5 C14.4 6.9 14.7 6.1 14.6 5.3 C13.9 5.3 13.1 5.8 12.6 6.3 C12.2 6.8 11.8 7.6 11.9 8.4 C12.7 8.4 13.4 8 13.9 7.5 Z" fill="#fff"/></svg><span style="color:#3d74db">ios-demo</span></div>
<div class="t" style="left:2522px;top:1472px;font-size:25px;color:#3e3446"><b>platform:</b> <svg width="24" height="24" viewBox="0 0 24 24" style="vertical-align:-4px;margin-right:6px"><rect width="24" height="24" rx="5" fill="#1f2236"/><path d="M15.6 12.6 C15.6 10.9 17 10.1 17.1 10 C16.3 8.8 15 8.7 14.6 8.7 C13.5 8.6 12.5 9.3 12 9.3 C11.4 9.3 10.6 8.7 9.7 8.7 C8.5 8.7 7.4 9.4 6.8 10.5 C5.6 12.6 6.5 15.7 7.7 17.4 C8.2 18.2 8.9 19.1 9.7 19.1 C10.5 19.1 10.8 18.6 11.8 18.6 C12.8 18.6 13 19.1 13.9 19.1 C14.8 19.1 15.3 18.3 15.9 17.5 C16.5 16.6 16.8 15.7 16.8 15.6 C16.8 15.6 15.6 15.1 15.6 12.6 Z M13.9 7.5 C14.4 6.9 14.7 6.1 14.6 5.3 C13.9 5.3 13.1 5.8 12.6 6.3 C12.2 6.8 11.8 7.6 11.9 8.4 C12.7 8.4 13.4 8 13.9 7.5 Z" fill="#fff"/></svg><span style="color:#3e3446">cocoa</span></div>
<div class="t" style="left:2522px;top:1506px;font-size:25px;color:#3e3446"><b>environment:</b> <span style="color:#3e3446">production</span></div>
<div class="t" style="left:2522px;top:1539px;font-size:25px;color:#3e3446"><b>version:</b> <span style="color:#3e3446">1.0 (1)</span></div>
<div class="t" style="left:2522px;top:1573px;font-size:25px;color:#3e3446"><b>duration:</b> <span style="color:#3e3446">7.68s</span></div>
<div class="t" style="left:2522px;top:1607px;font-size:25px;color:#3e3446"><b>threads:</b> <span style="color:#3e3446">7</span></div>
<div class="a" style="right:0;bottom:0;width:14px;height:14px;background:radial-gradient(circle at 0 0,transparent 13.5px,#1e2133 14.5px)"></div>
</body></html>
